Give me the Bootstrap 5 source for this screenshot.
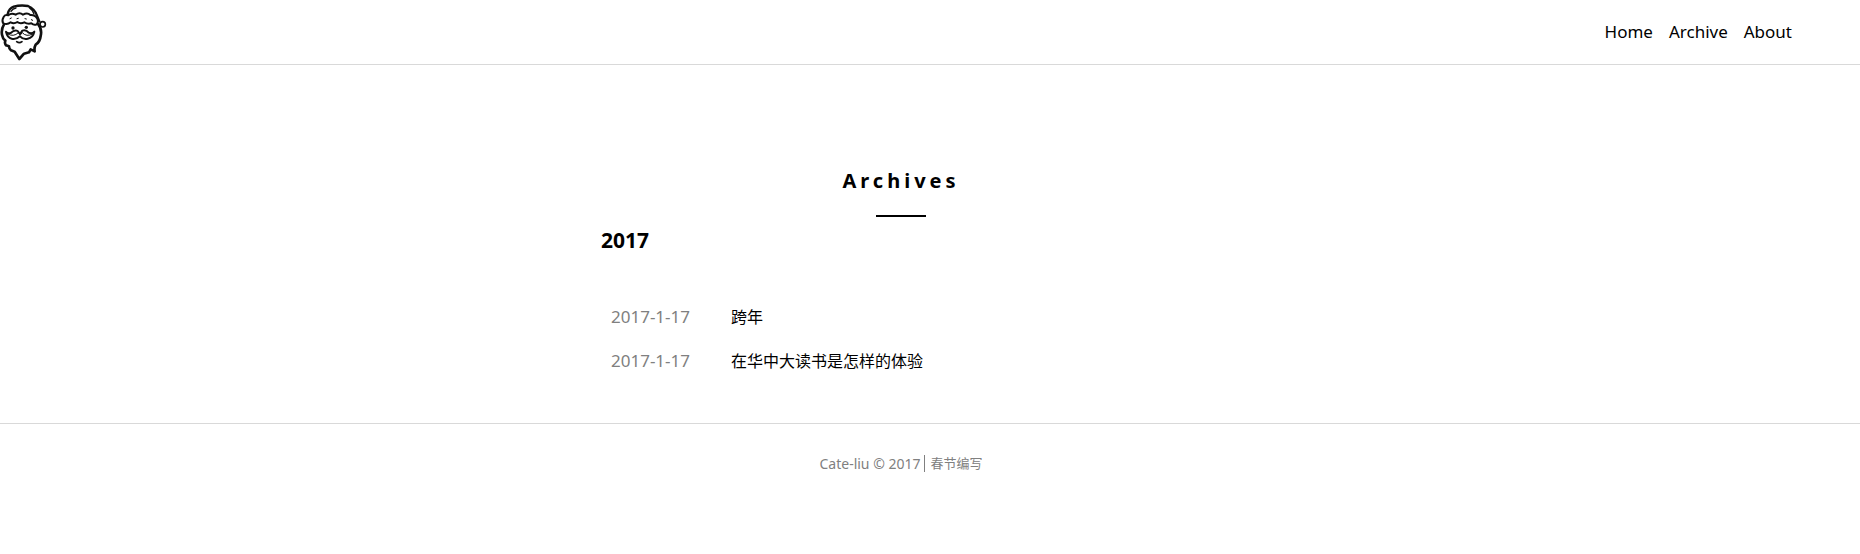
<!DOCTYPE html>
<html lang="zh-CN">
<head>
<meta charset="utf-8">
<meta name="viewport" content="width=device-width, initial-scale=1">
<title>Archives</title>
<link href="https://cdn.jsdelivr.net/npm/bootstrap@5.3.0/dist/css/bootstrap.min.css" rel="stylesheet">
<style>
body { font-family: "Noto Sans", "Noto Sans CJK SC", sans-serif; font-size: 16px; line-height: 24px; color: #000; background: #fff; }
a { color: #000; text-decoration: none; }
.site-header { height: 65px; border-bottom: 1px solid #d9d9d9; padding-right: 68px; }
.site-logo svg { display: block; }
.site-nav { gap: 16px; font-size: 17px; }
.page-body { padding-right: 58px; }
.archive-list { max-width: 600px; padding-top: 100px; padding-bottom: 40px; }
.archive-title { font-size: 20px; line-height: 32px; letter-spacing: 4px; }
.archive-title::after { content: ""; display: block; width: 50px; height: 2px; margin: 18px auto 0; background: #000; }
.archive-year { font-size: 21px; line-height: 32px; margin: 7px 0 39px; }
.archive-post { padding: 10px; }
.archive-post time { width: 120px; font-size: 17px; color: #808080; }
.site-footer { border-top: 1px solid #d9d9d9; padding: 31px 58px 0 0; font-size: 14px; line-height: 17px; color: #808080; }
.footer-note { border-left: 1px solid #808080; margin-left: 4px; padding-left: 5px; font-size: 13px; }
</style>
</head>
<body>
<header class="site-header d-flex align-items-center justify-content-between">
  <a class="site-logo" href="#" aria-label="Home">
    <svg width="48" height="64" viewBox="0 0 144 192" fill="none" stroke="#111" stroke-width="6" stroke-linecap="round" stroke-linejoin="round">
      <path d="M23 42Q27 25 41 20Q62 14 84 18Q104 27 110 45L118 64" stroke-width="7"/>
      <path d="M48 24Q38 26 33 34M88 23Q98 30 102 42" stroke-width="4"/>
      <path d="M9 69Q5 60 11 51Q14 43 25 46Q34 38 47 44Q59 36 69 44Q82 37 91 45Q105 44 111 55Q117 65 110 73Q102 77 94 70Q83 73 73 67Q61 73 52 66Q42 73 32 67Q21 76 9 69Z"/>
      <path d="M30 56l4-2M51 56l4-1M75 56l4 1M94 59l4 2" stroke-width="3"/>
      <circle cx="128" cy="73" r="8" stroke-width="5"/>
      <path d="M12 73Q3 88 6 104Q8 116 16 122Q13 130 18 136L27 139Q27 147 33 151L44 155L58 177L72 161L87 157L92 148L104 154Q102 143 107 134Q120 126 122 108Q127 88 114 72" stroke-width="8"/>
      <path d="M18 95Q22 102 32 99Q44 88 53 93L60 102L67 92Q78 88 86 98Q96 102 103 95Q99 113 83 116Q69 119 60 109Q49 119 35 116Q22 113 18 95Z"/>
      <path d="M23 102Q41 112 55 98L60 106L67 98Q79 112 98 102" stroke-width="3"/>
      <path d="M50 125Q58 131 66 125" stroke-width="5"/>
      <circle cx="39" cy="84" r="5" fill="#111" stroke="none"/>
      <circle cx="79" cy="82" r="5" fill="#111" stroke="none"/>
    </svg>
  </a>
  <nav class="site-nav d-flex" aria-label="Main">
    <a href="#">Home</a>
    <a href="#">Archive</a>
    <a href="#">About</a>
  </nav>
</header>
<main class="page-body">
  <div class="archive-list mx-auto">
    <h1 class="archive-title text-center fw-bold mb-0">Archives</h1>
    <h2 class="archive-year fw-bold">2017</h2>
    <ul class="list-unstyled mb-0">
      <li class="archive-post d-flex"><time datetime="2017-01-17">2017-1-17</time><a href="#">跨年</a></li>
      <li class="archive-post d-flex"><time datetime="2017-01-17">2017-1-17</time><a href="#">在华中大读书是怎样的体验</a></li>
    </ul>
  </div>
</main>
<footer class="site-footer d-flex justify-content-center">
  <span>Cate-liu © 2017</span><span class="footer-note">春节编写</span>
</footer>
<script src="https://cdn.jsdelivr.net/npm/bootstrap@5.3.0/dist/js/bootstrap.bundle.min.js"></script>
</body>
</html>
